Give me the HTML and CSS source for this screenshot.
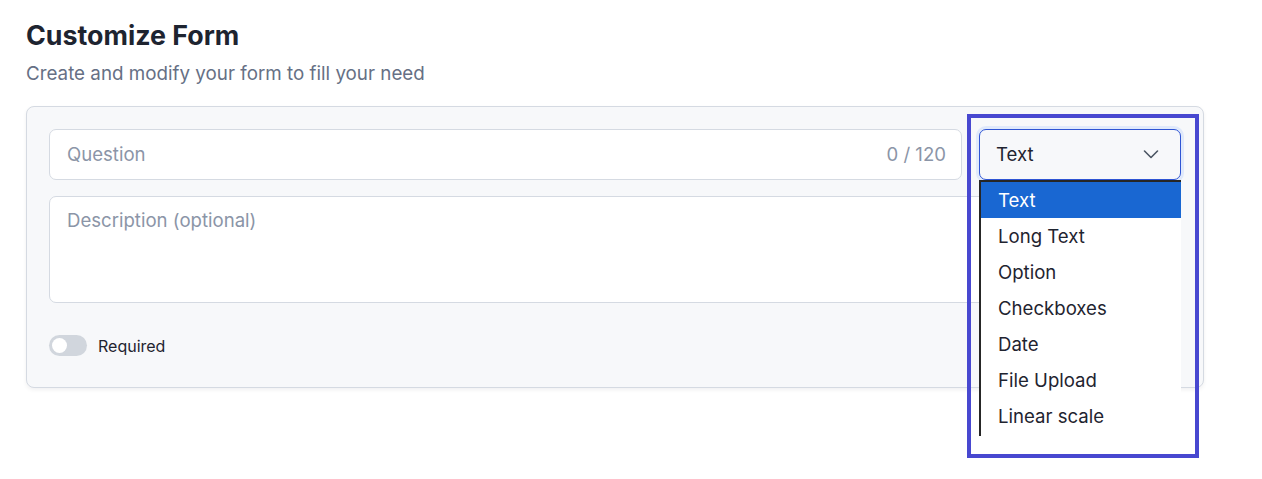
FILE: index.html
```html
<!DOCTYPE html>
<html lang="en">
<head>
<meta charset="utf-8">
<title>Customize Form</title>
<link rel="stylesheet" href="styles.css">
</head>
<body>
<main class="page">
  <h1 class="title">Customize Form</h1>
  <p class="subtitle">Create and modify your form to fill your need</p>
  <section class="card">
    <div class="row">
      <div class="question">
        <input class="question-input" type="text" placeholder="Question">
        <span class="counter">0 / 120</span>
      </div>
      <div class="select-wrap">
        <div class="select">
          <span class="select-value">Text</span>
          <svg class="chevron" width="16" height="16" viewBox="0 0 16 16" fill="none"><path d="M1.5 5l6.5 6.5L14.5 5" stroke="#4b5563" stroke-width="1.6" stroke-linecap="round" stroke-linejoin="round"/></svg>
        </div>
        <ul class="options">
          <li class="option active">Text</li>
          <li class="option">Long Text</li>
          <li class="option">Option</li>
          <li class="option">Checkboxes</li>
          <li class="option">Date</li>
          <li class="option">File Upload</li>
          <li class="option">Linear scale</li>
        </ul>
        <div class="highlight"></div>
      </div>
    </div>
    <textarea class="description" placeholder="Description (optional)"></textarea>
    <div class="required">
      <span class="toggle"><span class="knob"></span></span>
      <span class="required-label">Required</span>
    </div>
  </section>
</main>
</body>
</html>
```

FILE: styles.css
```css
* { box-sizing: border-box; }
html, body { margin: 0; padding: 0; background: #ffffff; }
body { font-family: Inter, "Noto Sans", "Liberation Sans", sans-serif; color: #1f2937; min-height: 479px; }

.page { padding: 17px 0 0 26px; width: 1204px; min-height: 479px; }

.title {
  margin: 0;
  font-size: 26.8px;
  line-height: 36px;
  font-weight: 700;
  color: #1e2430;
}
.subtitle {
  margin: 8px 0 0;
  font-size: 18.8px;
  line-height: 26px;
  color: #667085;
}

.card {
  margin-top: 19px;
  width: 1178px;
  background: #f7f8fa;
  border: 1px solid #d5dae2;
  border-radius: 8px;
  box-shadow: 0 2px 4px rgba(15, 23, 42, 0.06);
  padding: 22px 22px 31px;
}

.row { display: flex; gap: 17px; }

.question {
  flex: 1;
  height: 51px;
  background: #fff;
  border: 1px solid #d5dae2;
  border-radius: 7px;
  display: flex;
  align-items: center;
  padding: 0 15px 2px 17px;
}
.question-input {
  flex: 1;
  border: 0;
  outline: 0;
  background: transparent;
  font-family: inherit;
  font-size: 18.6px;
  color: #1f2937;
  padding: 0;
}
.question-input::placeholder, .description::placeholder { color: #8b95a7; opacity: 1; }
.counter { font-size: 18.6px; color: #8b95a7; }

.select-wrap { position: relative; width: 202px; }
.select {
  height: 51px;
  background: #f7f8fa;
  border: 1px solid #2f55d4;
  border-radius: 7px;
  box-shadow: 0 0 0 3px #e0e9fb;
  display: flex;
  align-items: center;
  justify-content: space-between;
  padding: 0 21px 2px 16px;
}
.select-value { font-size: 18.6px; color: #1f2430; }
.chevron { display: block; }

.options {
  position: absolute;
  top: 100%;
  left: 0;
  width: 202px;
  margin: 0;
  padding: 0 0 2px;
  list-style: none;
  background: #fff;
  border-top: 2px solid #262626;
  border-left: 2px solid #262626;
  z-index: 2;
}
.option {
  height: 36px;
  line-height: 36px;
  padding-left: 17px;
  font-size: 18.6px;
  color: #1f2430;
}
.option.active { background: #1967d2; color: #fff; }

.highlight {
  position: absolute;
  left: -12px;
  top: -15px;
  width: 232px;
  height: 344px;
  border: 4px solid #4848d0;
  z-index: 3;
  pointer-events: none;
}

.description {
  display: block;
  width: 100%;
  height: 107px;
  margin-top: 16px;
  background: #fff;
  border: 1px solid #d5dae2;
  border-radius: 7px;
  padding: 11px 17px;
  font-family: inherit;
  font-size: 18.6px;
  line-height: 24px;
  color: #1f2937;
  resize: none;
  outline: 0;
}

.required {
  margin-top: 32px;
  display: flex;
  align-items: center;
  gap: 11px;
  height: 21px;
}
.toggle {
  width: 38px;
  height: 21px;
  border-radius: 11px;
  background: #d1d6dd;
  position: relative;
  display: block;
}
.knob {
  position: absolute;
  left: 3px;
  top: 3px;
  width: 15px;
  height: 15px;
  border-radius: 50%;
  background: #fff;
}
.required-label { font-size: 16px; color: #1f2430; }
```
